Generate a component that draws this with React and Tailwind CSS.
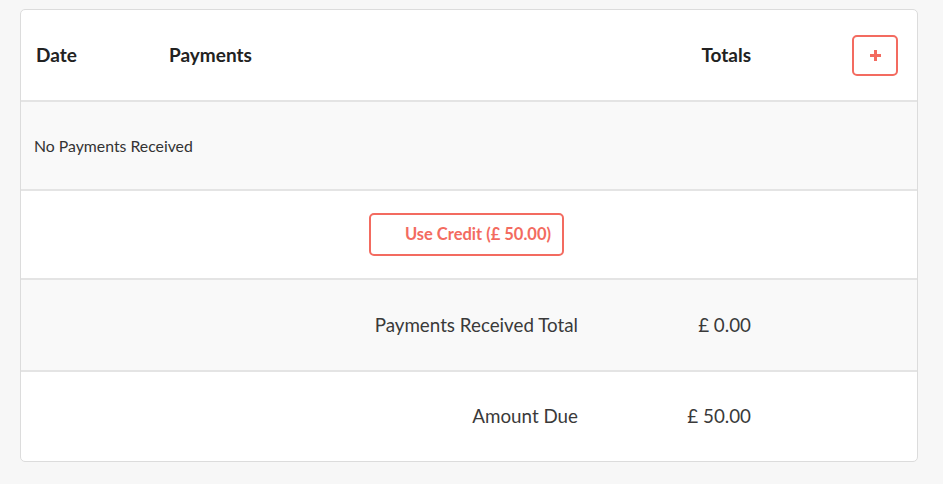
export default function App() {
  return (
    <div className="min-h-[484px] w-[943px] bg-[#f7f7f7] pt-[9px] pl-[20px]" style={{ fontFamily: "Lato, 'Open Sans', sans-serif" }}>
      <div className="w-[898px] overflow-hidden rounded-[5px] border border-[#dcdcdc] bg-white text-[#333]">
        {/* header */}
        <div className="flex h-[92px] items-center border-b-2 border-[#e4e4e4] pl-[15px] pr-[19px]">
          <div className="w-[133px] text-[19px] font-bold text-[#222]">Date</div>
          <div className="flex-1 text-[19px] font-bold text-[#222]">Payments</div>
          <div className="text-[19px] font-bold text-[#222]">Totals</div>
          <button className="ml-[101px] flex h-[41px] w-[46px] items-center justify-center rounded-[5px] border-2 border-[#f36b60] bg-white">
            <svg width="13" height="13" viewBox="0 0 13 13">
              <path d="M6.5 1v11M1 6.5h11" stroke="#f36b60" strokeWidth="3" />
            </svg>
          </button>
        </div>
        {/* no payments */}
        <div className="flex h-[89px] items-center border-b-2 border-[#e4e4e4] bg-[#f9f9f9] pl-[13px] text-[15.8px] text-[#333]">
          No Payments Received
        </div>
        {/* use credit */}
        <div className="flex h-[89px] items-center border-b-2 border-[#e4e4e4] pl-[348px]">
          <button className="flex h-[43px] w-[195px] items-center justify-end rounded-[5px] border-2 border-[#f36b60] bg-white pr-[11px] text-[16.5px] font-bold text-[#f36b60]">
            Use Credit (£ 50.00)
          </button>
        </div>
        {/* payments received total */}
        <div className="flex h-[92px] items-center border-b-2 border-[#e4e4e4] bg-[#f9f9f9] text-[18.8px] text-[#3a3a3a]">
          <div className="w-[557px] text-right">Payments Received Total</div>
          <div className="w-[173px] text-right">£ 0.00</div>
        </div>
        {/* amount due */}
        <div className="flex h-[89px] items-center text-[18.8px] text-[#3a3a3a]">
          <div className="w-[557px] text-right">Amount Due</div>
          <div className="w-[173px] text-right">£ 50.00</div>
        </div>
      </div>
    </div>
  );
}
